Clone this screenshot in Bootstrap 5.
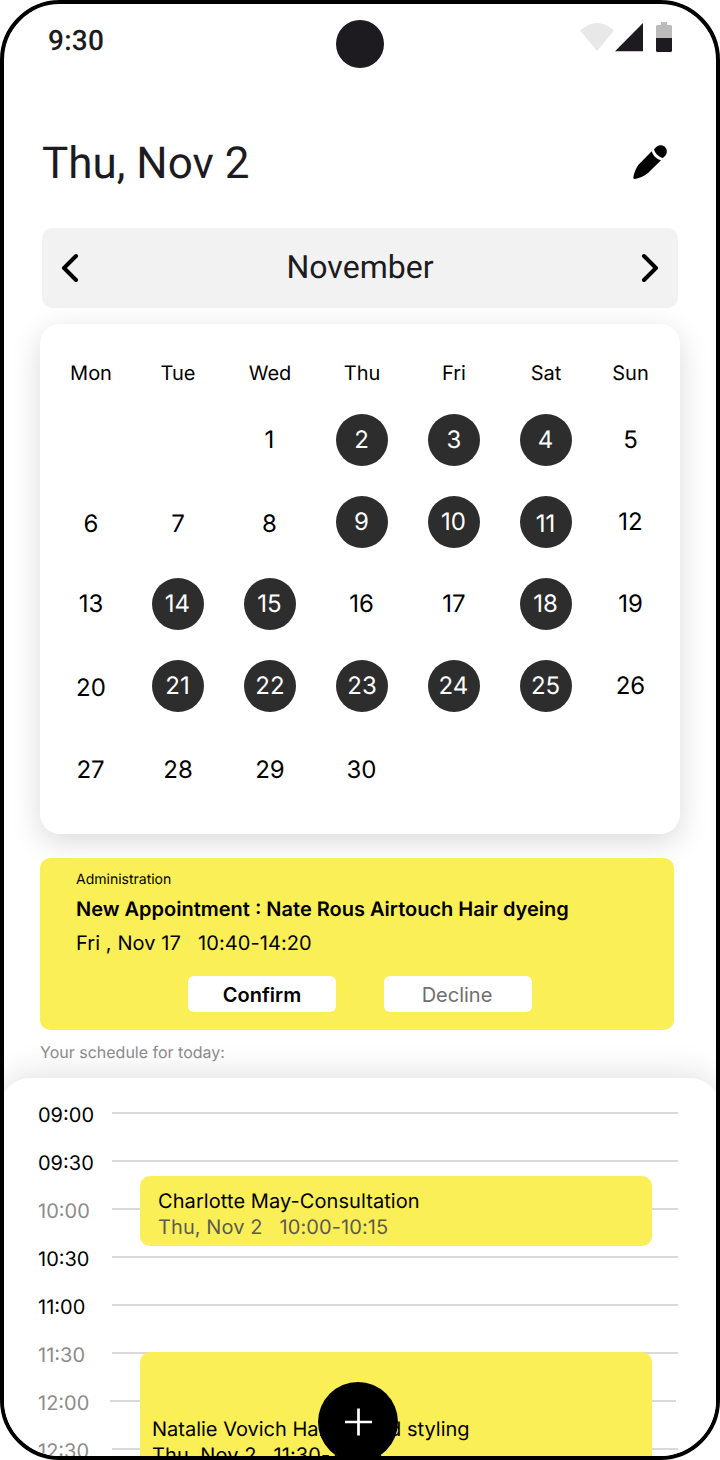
<!DOCTYPE html>
<html lang="en">
<head>
<meta charset="utf-8">
<meta name="viewport" content="width=device-width, initial-scale=1">
<title>Schedule</title>
<link href="https://cdn.jsdelivr.net/npm/bootstrap@5.3.0/dist/css/bootstrap.min.css" rel="stylesheet">
<style>
  body { font-family: Inter, "Liberation Sans", sans-serif; background: #fff; color: #000; text-rendering: geometricPrecision; }
  .phone { width: 720px; height: 1460px; border: 4px solid #000; border-radius: 60px; background: #fff; }
  .roboto { font-family: Roboto, sans-serif; color: #1d1b20; }
  .status-bar { height: 76px; }
  .clock { font-size: 28px; line-height: 40px; font-weight: 500; letter-spacing: .28px; margin: 17px 0 0 44px; }
  .camera { width: 48px; height: 48px; left: 332px; top: 16px; background: #1d1b20; }
  .status-icons { margin: 16px 42px 0 0; }
  .title-row { height: 148px; padding: 0 48px 0 38px; }
  .title-row h1 { font-size: 44px; line-height: 52px; font-weight: 400; margin-top: 57px; }
  .title-row svg { margin-top: 64px; }
  .month-bar { height: 80px; margin: 0 38px; border-radius: 10px; background: #f2f2f2; }
  .month-bar h2 { font-size: 32px; line-height: 40px; font-weight: 400; padding-bottom: 3px; }
  .calendar { height: 510px; margin: 16px 36px 0; border-radius: 20px; background: #fff; box-shadow: 0 8px 30px rgba(0,0,0,.15); padding: 25px 0 0 8px; }
  .days { display: grid; grid-template-columns: 84px repeat(5, 92px) 77px; grid-template-rows: 50px repeat(5, 82px); justify-items: center; align-items: center; }
  .days > :nth-child(7n+1) { margin-left: 2px; }
  .wd { font-size: 20px; line-height: 24px; padding: 0 0 2px 0; }
  .day { width: 52px; height: 52px; line-height: 52px; font-size: 24px; text-align: center; }
  .busy { border-radius: 50%; background: #2d2d2d; color: #fff; }
  .low { line-height: 55px; }
  .back { padding-right: 1px; }
  .notice { width: 634px; height: 172px; margin: 24px 0 0 36px; padding: 13px 36px 0; border-radius: 10px; background: #faef57; }
  .from { font-size: 14px; line-height: 18px; }
  .headline { font-size: 20px; line-height: 26px; font-weight: 600; margin-top: 7px; }
  .when { font-size: 20px; line-height: 26px; margin-top: 8px; white-space: pre; letter-spacing: .08px; }
  .choices { padding-left: 6px; }
  .choice { width: 148px; height: 36px; border-radius: 6px; padding: 0; border: 0; background: #fff; font-size: 20px; line-height: 38px; color: #6f6f6f; }
  .choice:last-child { padding-right: 2px; }
  .choice.main { font-weight: 600; color: #000; }
  .caption-line { font-size: 16px; line-height: 20px; color: #8c8c8c; margin: 12px 0 0 36px; }
  .sheet { height: 390px; margin: 16px -4px 0; padding: 11px 42px 0 38px; border-radius: 30px 30px 0 0; background: #fff; box-shadow: 0 0 36px rgba(0,0,0,.15); }
  .slot { height: 48px; font-size: 20px; }
  .slot time { width: 74px; padding-top: 3px; }
  .slot hr { margin: 0; border: 0; height: 2px; background: #d9d9d9; opacity: 1; }
  .slot.off time { color: #8c8c8c; }
  .slot.noon { margin-right: 2px; }
  .slot.noon time { width: 72px; }
  .event { left: 140px; width: 512px; border-radius: 10px; background: #faef57; font-size: 20px; line-height: 26px; white-space: pre; }
  .event-a { top: 98px; height: 70px; padding: 12px 18px; letter-spacing: .08px; }
  .event-b { top: 274px; height: 140px; padding: 64px 12px 0; }
  .event-b div + div { letter-spacing: .08px; }
  .soft { color: #5d5b4f; }
  .add { width: 80px; height: 80px; left: 314px; top: 1378px; background: #000; border: 0; padding: 0; }
</style>
</head>
<body>
<main class="phone position-relative overflow-hidden">
  <header class="status-bar d-flex justify-content-between align-items-start">
    <span class="clock roboto">9:30</span>
    <span class="camera position-absolute rounded-circle"></span>
    <svg class="status-icons" width="98" height="40" viewBox="576 20 98 40">
      <path d="M580 30.5Q597 15.500 614 30.500L597 51Z" fill="#e8e8e8"/>
      <path d="M643 23V51.300H615Z" fill="#1d1b20"/>
      <path d="M661 22h6v3h3.500a1.500 1.500 0 0 1 1.500 1.500V38H656V26.500a1.500 1.500 0 0 1 1.500-1.500H661Z" fill="#bbb"/>
      <path d="M656 38h16v12.500a1.500 1.500 0 0 1-1.500 1.500h-13a1.500 1.500 0 0 1-1.500-1.500Z" fill="#1d1b20"/>
    </svg>
  </header>

  <section class="title-row d-flex justify-content-between align-items-start">
    <h1 class="roboto mb-0">Thu, Nov 2</h1>
    <svg width="36" height="36" viewBox="632 144 36 36">
      <path d="M651.700 151.200C653 155.500 656.500 159 661 160.300L648 173C644.500 176.500 638.500 178.400 634.800 179Q633.100 179.100 633.300 177.300C634.200 172.500 636 168 638.500 164.800Z"/>
      <path d="M654 149.300L656.500 146.800C659 144.600 662.700 144.700 665 147C667.300 149.300 667.500 153.200 665.200 155.700L662.900 158C658.500 157 655 153.500 654 149.300Z"/>
    </svg>
  </section>

  <nav class="month-bar d-flex justify-content-between align-items-center px-3">
    <svg width="24" height="32" viewBox="0 0 24 32" fill="none" stroke="#000" stroke-width="4" stroke-linecap="round" stroke-linejoin="round"><path d="M18 4L6 16l12 12"/></svg>
    <h2 class="roboto mb-0">November</h2>
    <svg width="24" height="32" viewBox="0 0 24 32" fill="none" stroke="#000" stroke-width="4" stroke-linecap="round" stroke-linejoin="round"><path d="M6 4l12 12L6 28"/></svg>
  </nav>

  <section class="calendar">
    <div class="days">
      <span class="wd">Mon</span><span class="wd">Tue</span><span class="wd">Wed</span><span class="wd">Thu</span><span class="wd">Fri</span><span class="wd">Sat</span><span class="wd">Sun</span>
      <span></span><span></span><span class="day back">1</span><span class="day busy back">2</span><span class="day busy">3</span><span class="day busy back">4</span><span class="day">5</span>
      <span class="day low">6</span><span class="day low">7</span><span class="day low back">8</span><span class="day busy back">9</span><span class="day busy back">10</span><span class="day busy low back">11</span><span class="day">12</span>
      <span class="day">13</span><span class="day busy back">14</span><span class="day busy back">15</span><span class="day back">16</span><span class="day">17</span><span class="day busy back">18</span><span class="day">19</span>
      <span class="day low">20</span><span class="day busy back">21</span><span class="day busy">22</span><span class="day busy">23</span><span class="day busy back">24</span><span class="day busy back">25</span><span class="day">26</span>
      <span class="day low back">27</span><span class="day low">28</span><span class="day low">29</span><span class="day low back">30</span>
    </div>
  </section>

  <section class="notice">
    <div class="from">Administration</div>
    <div class="headline">New Appointment : Nate Rous Airtouch Hair dyeing</div>
    <div class="when">Fri , Nov 17   10:40-14:20</div>
    <div class="choices d-flex justify-content-center gap-5 mt-3 pt-1">
      <button class="btn choice main">Confirm</button>
      <button class="btn choice">Decline</button>
    </div>
  </section>

  <p class="caption-line mb-0">Your schedule for today:</p>

  <section class="sheet position-relative">
    <div class="slot d-flex align-items-center"><time>09:00</time><hr class="flex-grow-1"></div>
    <div class="slot d-flex align-items-center"><time>09:30</time><hr class="flex-grow-1"></div>
    <div class="slot off d-flex align-items-center"><time>10:00</time><hr class="flex-grow-1"></div>
    <div class="slot d-flex align-items-center"><time>10:30</time><hr class="flex-grow-1"></div>
    <div class="slot d-flex align-items-center"><time>11:00</time><hr class="flex-grow-1"></div>
    <div class="slot off d-flex align-items-center"><time>11:30</time><hr class="flex-grow-1"></div>
    <div class="slot off noon d-flex align-items-center"><time>12:00</time><hr class="flex-grow-1"></div>
    <div class="slot off d-flex align-items-center"><time>12:30</time><hr class="flex-grow-1"></div>
    <article class="event event-a position-absolute"><div>Charlotte May-Consultation</div><div class="soft">Thu, Nov 2   10:00-10:15</div></article>
    <article class="event event-b position-absolute"><div>Natalie Vovich Haircut and styling</div><div>Thu, Nov 2   11:30-13:00</div></article>
  </section>

  <button class="add position-absolute rounded-circle d-flex align-items-center justify-content-center" aria-label="Add appointment">
    <svg width="28" height="28" viewBox="0 0 28 28" fill="none" stroke="#fff" stroke-width="2.700"><path d="M1 14h27M14.500 .5v27"/></svg>
  </button>
</main>
<script src="https://cdn.jsdelivr.net/npm/bootstrap@5.3.0/dist/js/bootstrap.bundle.min.js"></script>
</body>
</html>
